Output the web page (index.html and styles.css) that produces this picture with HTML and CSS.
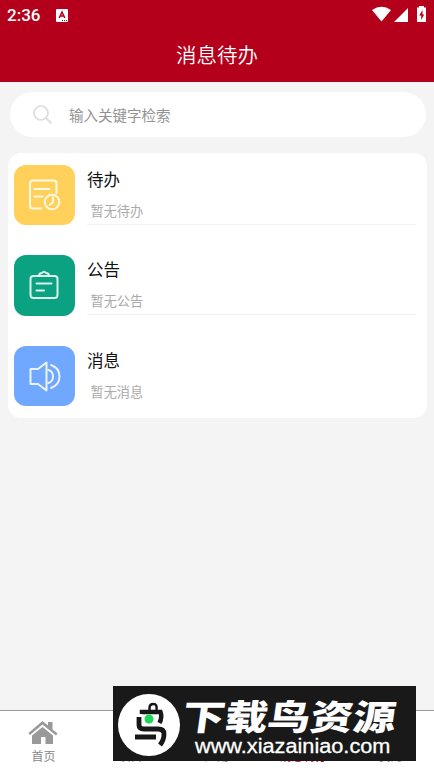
FILE: index.html
```html
<!DOCTYPE html>
<html lang="zh-CN">
<head>
<meta charset="utf-8">
<title>消息待办</title>
<link rel="stylesheet" href="styles.css">
</head>
<body>
<div class="app">
  <header class="header">
    <div class="status">
      <span class="time">2:36</span>
      <svg class="lang" width="12" height="13" viewBox="0 0 12 13"><rect width="12" height="13" rx="1" fill="#fff"/><path d="M3.2 9 6 3l2.800 6M4.200 7h3.600" fill="none" stroke="#b5001b" stroke-width="1.500"/><path d="M6 11.500h5" stroke="#b5001b" stroke-dasharray="1 1"/></svg>
      <svg class="signals" width="56" height="17" viewBox="0 0 56 17"><path d="M0 4Q9.500-2.500 19 4L9.500 15.500ZM22 16 36 2V16Z" fill="#fff"/><path d="M47 0h5v1.500h2V16h-9V1.500h2Z" fill="#fff"/><path d="m50.500 4-3.300 5.500h2V14l3-5.500h-1.700Z" fill="#b5001b"/></svg>
    </div>
    <h1 class="title">消息待办</h1>
  </header>
  <main class="content">
    <div class="search">
      <svg width="20" height="20" viewBox="0 0 20 20" fill="none" stroke="#dedede" stroke-width="1.700"><circle cx="8" cy="8" r="7"/><path d="m13 13 5.500 5.500" stroke-width="2"/></svg>
      <span>输入关键字检索</span>
    </div>
    <section class="list">
      <article class="item">
        <div class="tile yellow"><svg width="60" height="60" viewBox="0 0 60 60"><path d="M27 43.500H19a3 3 0 0 1-3-3V18.500a3 3 0 0 1 3-3h20.500a3 3 0 0 1 3 3V28M20.500 24h15M20.500 31.500h8"/><circle cx="38" cy="37" r="7.300"/><path d="M39 32.500v4.500l-3 3"/></svg></div>
        <div class="text"><h2>待办</h2><p>暂无待办</p></div>
      </article>
      <article class="item">
        <div class="tile green"><svg width="60" height="60" viewBox="0 0 60 60"><rect x="16.500" y="21" width="27" height="22" rx="3"/><path d="M25 21q0-3 3-3 2-2.500 4 0 3 0 3 3M22.500 28.500h15M22.500 35.500h7.500"/></svg></div>
        <div class="text"><h2>公告</h2><p>暂无公告</p></div>
      </article>
      <article class="item">
        <div class="tile blue"><svg width="60" height="60" viewBox="0 0 60 60"><path d="M16.500 23h7.500l8.500-6.500v28L24 38h-7.500ZM34.500 24q4.500 1.500 4.500 6.500t-4.500 6.500M37 19q8.500 3 8.500 11.500T37 42"/></svg></div>
        <div class="text"><h2>消息</h2><p>暂无消息</p></div>
      </article>
    </section>
  </main>
  <nav class="tabs">
    <div class="tab"><svg width="30" height="25" viewBox="0 0 30 25"><path d="M.5 13 14.500 1l5.500 4.500V2h4.500v7.500l5 4-1.500 2-13.500-11L2 15ZM4 15.500l10.500-8.500L25 15.500V24h-7.500v-7H13v7H4Z" fill="#999"/></svg><span>首页</span></div>
    <div class="tab"><span>项目</span></div>
    <div class="tab"><span>应用</span></div>
    <div class="tab active"><span>消息待办</span></div>
    <div class="tab"><span>我的</span></div>
  </nav>
  <aside class="watermark">
    <svg class="logo" width="62" height="62" viewBox="0 0 62 62"><circle cx="31" cy="31" r="31" fill="#fff"/><g fill="none" stroke="#171717"><path d="M24 20v-2h18.500q2 5-1 11" stroke-width="4.500"/><path d="M31.500 17v-3q0-4 4-4t3 6" stroke-width="2.500"/><path d="M21 23v8q0 4 5 4h14q6 0 6 5 0 6-4 11M17 43h21" stroke-width="4.800"/></g><circle cx="31" cy="25" r="4.500" fill="#18da58"/></svg>
    <div class="brand"><strong>下载鸟资源</strong><span>www.xiazainiao.com</span></div>
  </aside>
</div>
</body>
</html>
```

FILE: styles.css
```css
* { box-sizing: border-box; }
body { margin: 0; font-family: "Noto Sans CJK SC", sans-serif; }
h1, h2, p { margin: 0; font-weight: 400; }
svg { display: block; flex: none; }
.app { position: relative; width: 434px; height: 771px; background: #f4f4f4; display: flex; flex-direction: column; overflow: hidden; }
.header { height: 82px; background: #b5001b; color: #fff; flex: none; }
.status { height: 30px; display: flex; align-items: center; padding: 0 6px 0 7px; }
.time { font: 500 17px/30px Roboto, sans-serif; width: 49px; }
.signals { margin-left: auto; margin-bottom: 2px; }
.title { font-size: 20.5px; font-weight: 350; line-height: 49px; text-align: center; }
.content { flex: 1; padding: 10px 8px 0; }
.search { height: 45px; width: 416px; margin-left: 1.5px; border-radius: 23px; background: #fff; display: flex; align-items: center; padding-left: 23.5px; gap: 16px; color: #929292; font-size: 14.5px; }
.search span { padding-bottom: 1px; }
.list { width: 419px; height: 265px; margin-top: 16px; background: #fff; border-radius: 13px; padding: 12px 11px 0 6px; }
.item { display: flex; gap: 12px; height: 90.4px; }
.tile { width: 61px; height: 60.4px; border-radius: 12px; flex: none; }
.tile svg { fill: none; stroke: rgba(255,255,255,.85); stroke-width: 2; stroke-linecap: round; stroke-linejoin: round; }
.yellow { background: #ffd15a; }
.green { background: #0ba282; }
.blue { background: #70a8ff; }
.text { flex: 1; height: 60px; border-bottom: 1px solid #f2f2f2; }
.item:last-child .text { border: 0; }
.text h2 { font-size: 16.5px; line-height: 28px; color: #111; }
.text p { font-size: 13.2px; line-height: 20px; margin: 8px 0 0 3.5px; color: #aaa; }
.tabs { height: 61px; border-top: 1px solid #999; background: #fff; display: flex; flex: none; }
.tab { width: 86.8px; display: flex; flex-direction: column; align-items: center; justify-content: flex-end; padding-bottom: 6px; font-size: 12px; line-height: 18px; color: #888; gap: 2px; }
.tab.active { color: #b5001b; }
.watermark { position: absolute; left: 113px; top: 686px; width: 303px; height: 75px; background: #191919; color: #fff; display: flex; padding: 8px 0 0 5px; }
.brand { display: flex; flex-direction: column; white-space: nowrap; }
.brand strong { font-size: 35px; line-height: 40px; font-weight: 900; transform: skewX(-8deg) scaleX(1.22); transform-origin: left bottom; margin: 1px 0 0; width: 175px; }
.brand span { font: 20px/22px "Liberation Sans", sans-serif; -webkit-text-stroke: .3px #fff; margin: 0 0 0 15px; width: 180px; transform: scaleX(1.085); transform-origin: left; }
```
